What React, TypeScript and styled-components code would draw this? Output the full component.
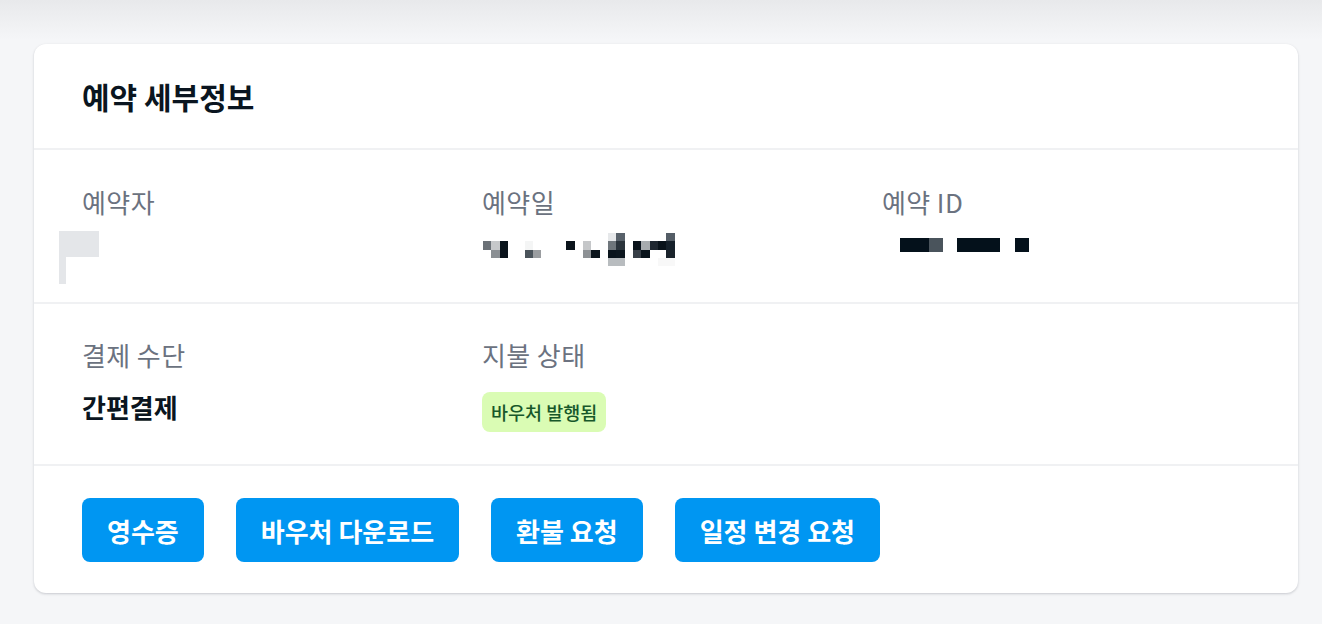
import React from "react";
import styled, { createGlobalStyle } from "styled-components";

const GlobalStyle = createGlobalStyle`
  * { box-sizing: border-box; }
  html, body { margin: 0; padding: 0; }
  body {
    font-family: "Noto Sans CJK KR", "Noto Sans", sans-serif;
    background-color: #f5f6f8;
    background-image: linear-gradient(to bottom, #e8e9eb 0px, #f5f6f8 40px);
    background-repeat: no-repeat;
    min-height: 624px;
  }
`;

const Page = styled.div`
  padding: 44px 24px 30px 34px;
`;

const Card = styled.section`
  background: #ffffff;
  border-radius: 12px;
  box-shadow: 0 1px 3px rgba(15, 23, 42, 0.14), 0 1px 2px rgba(15, 23, 42, 0.06);
  overflow: hidden;
`;

const Header = styled.header`
  height: 106px;
  padding: 0 48px;
  display: flex;
  align-items: center;
  border-bottom: 2px solid #f0f1f3;
`;

const Title = styled.h2`
  margin: 0;
  font-size: 30px;
  line-height: 36px;
  font-weight: 700;
  color: #0a1520;
`;

const Section = styled.div<{ $top: number; $bottom: number }>`
  display: grid;
  grid-template-columns: repeat(3, 1fr);
  column-gap: 32px;
  padding: ${(p) => p.$top}px 48px ${(p) => p.$bottom}px;
  border-bottom: 2px solid #f0f1f3;
`;

const Field = styled.div<{ $gap: number }>`
  display: flex;
  flex-direction: column;
  gap: ${(p) => p.$gap}px;
`;

const Label = styled.div`
  font-size: 26px;
  line-height: 32px;
  font-weight: 400;
  letter-spacing: 0.4px;
  color: #6b7280;
`;

const Value = styled.div<{ $height: number }>`
  height: ${(p) => p.$height}px;
  display: flex;
  align-items: flex-start;
`;

const StrongValue = styled.span`
  font-size: 26px;
  line-height: 30px;
  font-weight: 700;
  color: #0a1520;
`;

const Mosaic = styled.svg<{ $dx: number; $dy: number }>`
  display: block;
  flex: none;
  margin-left: ${(p) => p.$dx}px;
  margin-top: ${(p) => p.$dy}px;
  overflow: visible;
`;

const Badge = styled.span`
  display: inline-flex;
  align-items: center;
  height: 40px;
  padding: 0 9px;
  border-radius: 8px;
  background: #dafcb4;
  color: #17582a;
  font-size: 18.5px;
  font-weight: 500;
  white-space: nowrap;
`;

const Actions = styled.div`
  display: flex;
  gap: 32px;
  padding: 32px 48px 31px;
`;

const ActionButton = styled.button`
  height: 64px;
  padding: 0 25px;
  border: none;
  border-radius: 8px;
  background: #0096f2;
  color: #ffffff;
  font-family: inherit;
  font-size: 26px;
  font-weight: 700;
  white-space: nowrap;
  cursor: pointer;
`;

type Cell = [number, number, string];

const dateCells: Cell[] = [
  [15, 0, "#e6e8ea"], [16, 0, "#58616a"], [22, 0, "#545d66"],
  [0, 1, "#6b7177"], [1, 1, "#c6c8ca"], [2, 1, "#0a141c"], [5, 1, "#f4f5f5"],
  [10, 1, "#0b141c"], [12, 1, "#c5c7c9"], [15, 1, "#6f767c"], [16, 1, "#2b343c"],
  [18, 1, "#0a131b"], [19, 1, "#a7abae"], [20, 1, "#1f2730"], [21, 1, "#09121a"], [22, 1, "#15202a"],
  [1, 2, "#8a8f93"], [2, 2, "#0a131b"], [5, 2, "#4b545b"], [6, 2, "#9a9da0"],
  [12, 2, "#8d9195"], [13, 2, "#0c151d"], [15, 2, "#0a141c"], [16, 2, "#0c161e"],
  [18, 2, "#373f47"], [19, 2, "#0a141c"], [22, 2, "#1a232b"],
  [15, 3, "#b8bcbf"], [16, 3, "#b8bcbf"], [21, 3, "#f8f8f8"], [22, 3, "#f8f8f8"],
];

const idCells: Cell[] = [
  [0, 0, "#04111b"], [1, 0, "#04111b"], [2, 0, "#4a545c"],
  [4, 0, "#04111b"], [5, 0, "#04111b"], [6, 0, "#04111b"], [8, 0, "#04111b"],
];

const PixelBlock: React.FC<{ cells: Cell[]; cols: number; rows: number; size: number; dx: number; dy: number }> = ({
  cells, cols, rows, size, dx, dy,
}) => (
  <Mosaic
    $dx={dx}
    $dy={dy}
    width={cols * size}
    height={rows * size}
    viewBox={`0 0 ${cols} ${rows}`}
    shapeRendering="crispEdges"
    aria-hidden="true"
  >
    {cells.map(([c, r, fill], i) => (
      <rect key={i} x={c} y={r} width={1} height={1} fill={fill} />
    ))}
  </Mosaic>
);

const NameMosaic: React.FC = () => (
  <Mosaic $dx={-23} $dy={1} width={40} height={53} viewBox="0 0 40 53" aria-hidden="true">
    <rect x={0} y={0} width={40} height={26} fill="#e4e6e9" />
    <rect x={0} y={26} width={7} height={27} fill="#e4e6e9" />
  </Mosaic>
);

export default function App() {
  return (
    <>
      <GlobalStyle />
      <Page>
        <Card>
          <Header>
            <Title>예약 세부정보</Title>
          </Header>

          <Section $top={36} $bottom={40}>
            <Field $gap={12}>
              <Label>예약자</Label>
              <Value $height={32}>
                <NameMosaic />
              </Value>
            </Field>
            <Field $gap={12}>
              <Label>예약일</Label>
              <Value $height={32}>
                <PixelBlock cells={dateCells} cols={23} rows={4} size={8.33} dx={1} dy={3} />
              </Value>
            </Field>
            <Field $gap={12}>
              <Label>예약 ID</Label>
              <Value $height={32}>
                <PixelBlock cells={idCells} cols={9} rows={1} size={14.33} dx={18} dy={8} />
              </Value>
            </Field>
          </Section>

          <Section $top={35} $bottom={32}>
            <Field $gap={21}>
              <Label>결제 수단</Label>
              <Value $height={40}>
                <StrongValue>간편결제</StrongValue>
              </Value>
            </Field>
            <Field $gap={21}>
              <Label>지불 상태</Label>
              <Value $height={40}>
                <Badge>바우처 발행됨</Badge>
              </Value>
            </Field>
          </Section>

          <Actions>
            <ActionButton>영수증</ActionButton>
            <ActionButton>바우처 다운로드</ActionButton>
            <ActionButton>환불 요청</ActionButton>
            <ActionButton>일정 변경 요청</ActionButton>
          </Actions>
        </Card>
      </Page>
    </>
  );
}
